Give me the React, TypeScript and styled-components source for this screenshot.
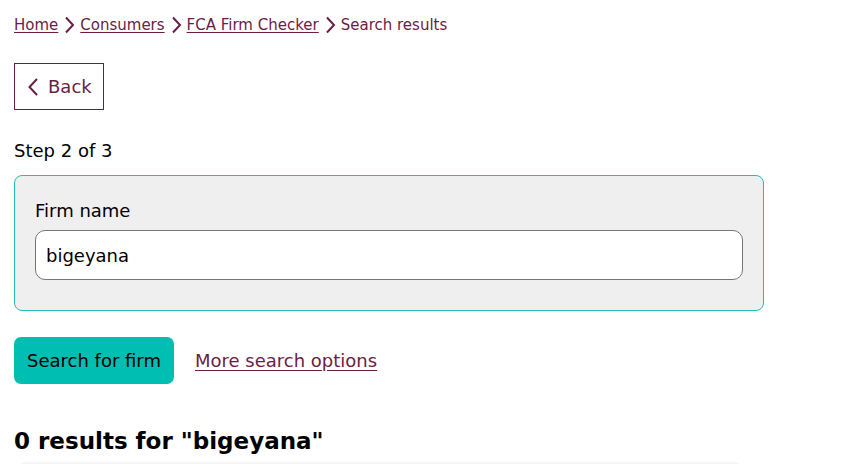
import React from "react";
import styled, { createGlobalStyle } from "styled-components";

const GlobalStyle = createGlobalStyle`
  body {
    margin: 0;
    background: #ffffff;
    font-family: "DejaVu Sans", Verdana, sans-serif;
    color: #000000;
  }
`;

const purple = "#6b1d45";
const teal = "#00bfb2";

const Page = styled.main`
  padding: 13px 14px 0;
  height: 464px;
  box-sizing: border-box;
  overflow: hidden;
`;

const Crumbs = styled.nav`
  display: flex;
  align-items: center;
  gap: 5px;
  font-size: 15px;
  line-height: 24px;
  color: ${purple};
`;

const CrumbLink = styled.a`
  color: ${purple};
  text-decoration: underline;
  text-underline-offset: 2px;
`;

const Chevron = styled.svg`
  width: 12px;
  height: 20px;
  flex-shrink: 0;
`;

const BackButton = styled.button`
  margin-top: 26px;
  display: inline-flex;
  align-items: center;
  gap: 9px;
  height: 47px;
  padding: 0 11px 0 12px;
  border: 1px solid ${purple};
  background: #ffffff;
  color: ${purple};
  font-family: inherit;
  font-size: 18px;
  cursor: pointer;
`;

const Step = styled.p`
  margin: 27px 0 0;
  font-size: 18px;
  line-height: 27px;
`;

const Panel = styled.section`
  margin-top: 11px;
  width: 750px;
  box-sizing: border-box;
  padding: 21px 20px 30px;
  background: #efefef;
  border: 1px solid #1ec0b4;
  border-radius: 8px;
`;

const Label = styled.label`
  display: block;
  font-size: 18px;
  line-height: 27px;
`;

const Input = styled.input`
  margin-top: 6px;
  display: block;
  width: 100%;
  height: 50px;
  box-sizing: border-box;
  padding: 0 10px;
  border: 1px solid #767676;
  border-radius: 10px;
  background: #ffffff;
  font-family: inherit;
  font-size: 18px;
  color: #000000;
  outline: none;
`;

const Actions = styled.div`
  margin-top: 26px;
  display: flex;
  align-items: center;
  gap: 21px;
`;

const SearchButton = styled.button`
  height: 47px;
  padding: 0 13px;
  border: none;
  border-radius: 7px;
  background: ${teal};
  color: #000000;
  font-family: inherit;
  font-size: 18px;
  cursor: pointer;
`;

const TextLink = styled.a`
  color: ${purple};
  font-size: 18px;
  text-decoration: underline;
  text-underline-offset: 3px;
`;

const Heading = styled.h2`
  margin: 42px 0 0;
  font-size: 23px;
  line-height: 30px;
  font-weight: bold;
`;

const Results = styled.div`
  margin: 6px 0 0 4px;
  width: 724px;
  height: 40px;
  background: #f6f6f6;
  border-radius: 8px;
`;

const Sep = () => (
  <Chevron viewBox="0 0 12 20" aria-hidden>
    <path d="M3 2.5 L10 10 L3 17.5" fill="none" stroke={purple} strokeWidth="2" />
  </Chevron>
);

export default function App() {
  return (
    <>
      <GlobalStyle />
      <Page>
        <Crumbs>
          <CrumbLink href="#">Home</CrumbLink>
          <Sep />
          <CrumbLink href="#">Consumers</CrumbLink>
          <Sep />
          <CrumbLink href="#">FCA Firm Checker</CrumbLink>
          <Sep />
          <span>Search results</span>
        </Crumbs>
        <BackButton>
          <svg width="12" height="20" viewBox="0 0 12 20" aria-hidden>
            <path d="M10 2 L2.5 10 L10 18" fill="none" stroke={purple} strokeWidth="2" />
          </svg>
          Back
        </BackButton>
        <Step>Step 2 of 3</Step>
        <Panel>
          <Label htmlFor="firm">Firm name</Label>
          <Input id="firm" defaultValue="bigeyana" />
        </Panel>
        <Actions>
          <SearchButton>Search for firm</SearchButton>
          <TextLink href="#">More search options</TextLink>
        </Actions>
        <Heading>0 results for "bigeyana"</Heading>
        <Results />
      </Page>
    </>
  );
}
